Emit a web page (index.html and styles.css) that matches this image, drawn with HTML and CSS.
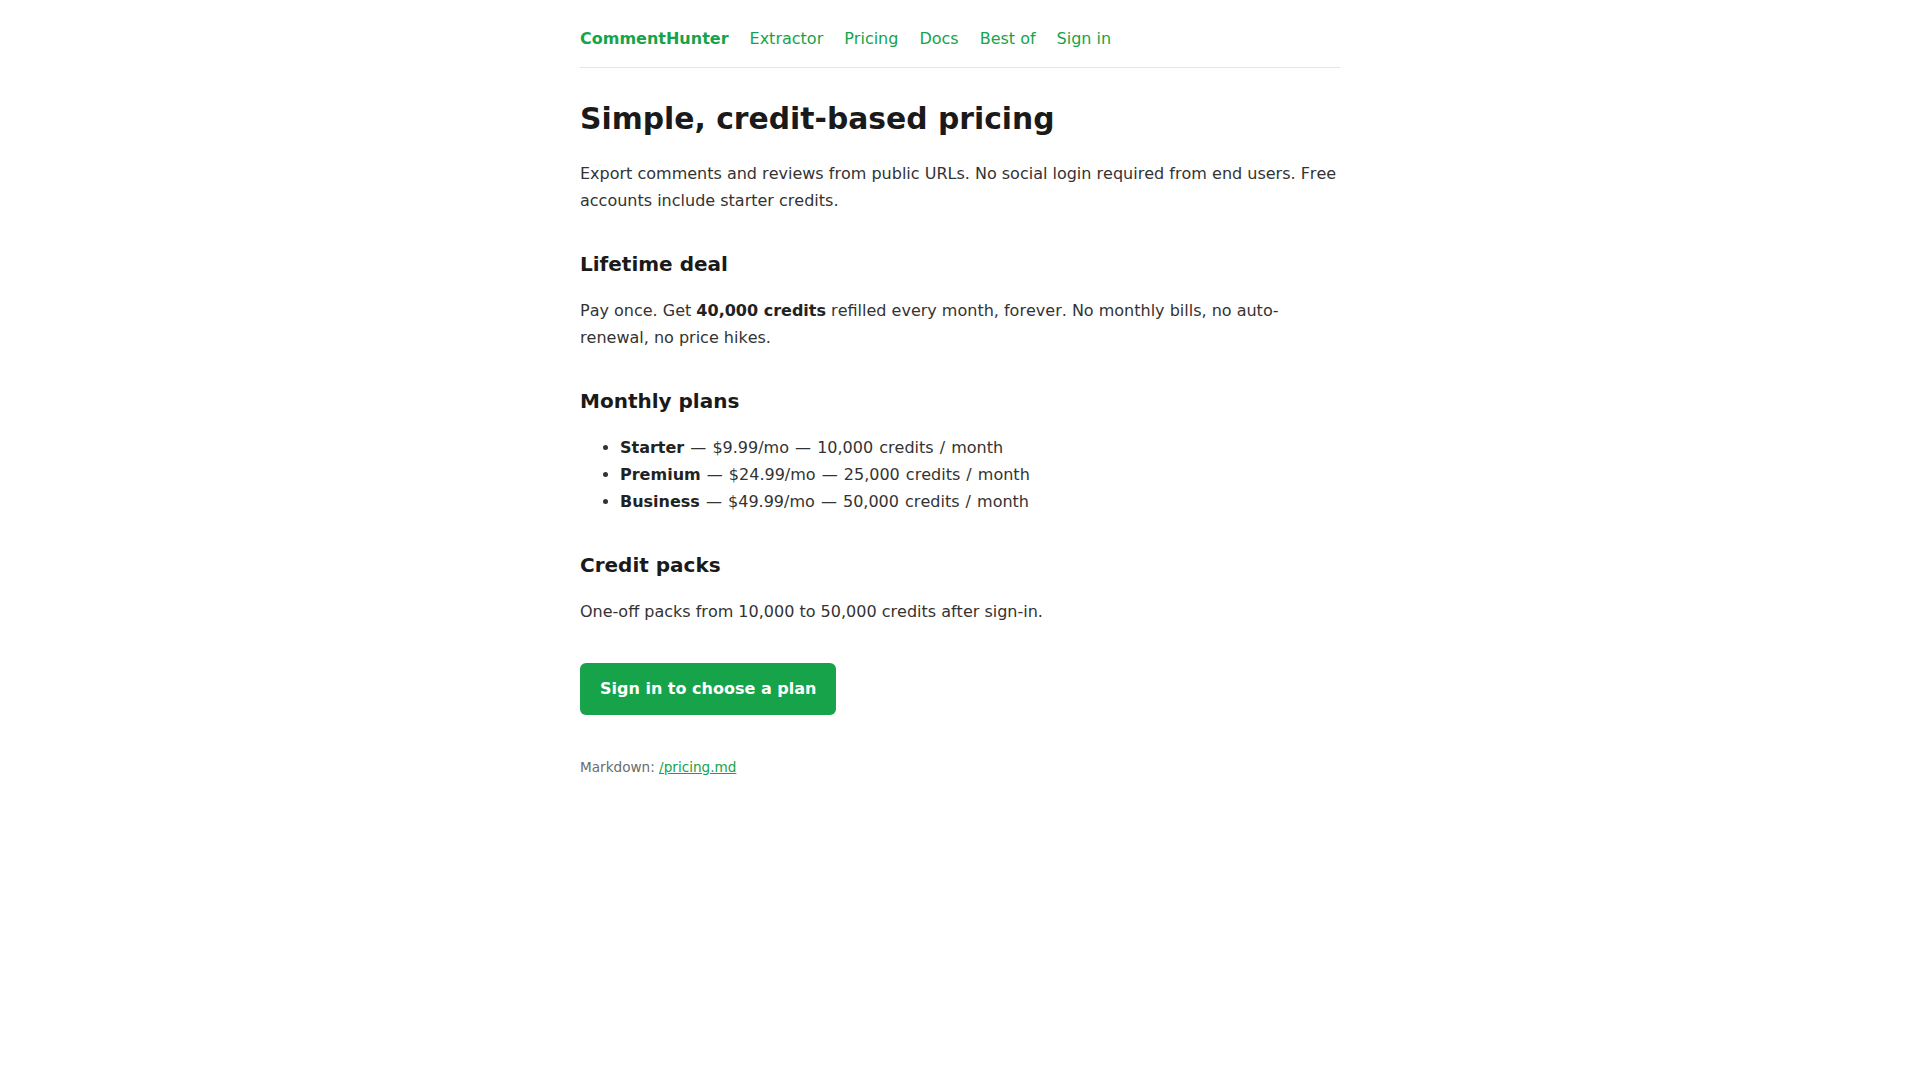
FILE: index.html
```html
<!DOCTYPE html>
<html lang="en">
<head>
<meta charset="utf-8">
<title>Pricing — CommentHunter</title>
<link rel="stylesheet" href="styles.css">
</head>
<body>
<div class="page">
  <nav class="nav">
    <a class="brand" href="#">CommentHunter</a>
    <a href="#">Extractor</a>
    <a href="#">Pricing</a>
    <a href="#">Docs</a>
    <a href="#">Best of</a>
    <a href="#">Sign in</a>
  </nav>
  <main>
    <h1>Simple, credit-based pricing</h1>
    <p>Export comments and reviews from public URLs. No social login required from end users. Free accounts include starter credits.</p>

    <h2>Lifetime deal</h2>
    <p>Pay once. Get <strong>40,000 credits</strong> refilled every month, forever. No monthly bills, no auto-renewal, no price hikes.</p>

    <h2>Monthly plans</h2>
    <ul class="plans">
      <li><strong>Starter</strong> — $9.99/mo — 10,000 credits / month</li>
      <li><strong>Premium</strong> — $24.99/mo — 25,000 credits / month</li>
      <li><strong>Business</strong> — $49.99/mo — 50,000 credits / month</li>
    </ul>

    <h2>Credit packs</h2>
    <p>One-off packs from 10,000 to 50,000 credits after sign-in.</p>

    <div class="cta"><a class="btn" href="#">Sign in to choose a plan</a></div>

    <p class="md">Markdown: <a href="#">/pricing.md</a></p>
  </main>
</div>
</body>
</html>
```

FILE: styles.css
```css
html, body {
  margin: 0;
  padding: 0;
  background: #ffffff;
}
body {
  font-family: "DejaVu Sans", sans-serif;
  font-size: 16px;
  line-height: 1.7;
  color: #333333;
  font-kerning: none;
}
.page {
  max-width: 760px;
  margin: 0 auto;
  padding: 25px 0 40px;
}
.nav {
  display: flex;
  gap: 21px;
  padding-bottom: 15px;
  border-bottom: 1px solid #e5e5e5;
  margin-bottom: 33px;
}
.nav a {
  color: #16a34a;
  text-decoration: none;
}
.nav .brand {
  font-weight: bold;
}
h1 {
  font-size: 29.8px;
  line-height: 1.2;
  color: #1a1a1a;
  margin: 0 0 23px;
}
h2 {
  font-size: 20px;
  line-height: 1.7;
  color: #1a1a1a;
  margin: 32.6px 0 16px;
}
p {
  margin: 0 0 16px;
}
strong {
  color: #222222;
}
.plans {
  margin: 0 0 16px;
  padding-left: 40px;
}
.plans li {
  word-spacing: 1px;
}
.cta {
  margin-top: 38px;
}
.btn {
  display: inline-block;
  background: #16a34a;
  color: #ffffff;
  font-weight: bold;
  line-height: 22px;
  padding: 15px 20px;
  border-radius: 6px;
  text-decoration: none;
}
.md {
  margin-top: 41px;
  font-size: 13.6px;
  color: #6b6b6b;
}
.md a {
  color: #16a34a;
}
```
